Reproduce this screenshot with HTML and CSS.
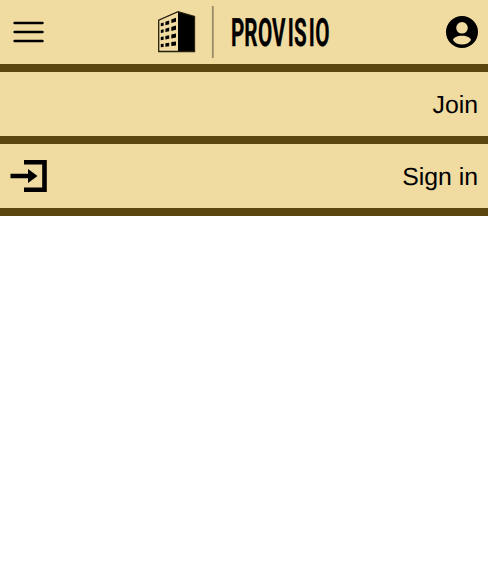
FILE: index.html
```html
<!DOCTYPE html>
<html lang="en">
<head>
<meta charset="utf-8">
<title>Provisio</title>
<link rel="stylesheet" href="styles.css">
</head>
<body>
<header class="bar header">
  <svg class="menu-icon" viewBox="0 0 32 24" aria-label="Menu"><path d="M2.700 3h27.700M2.700 12h27.700M2.700 21h27.700"/></svg>
  <svg class="logo" viewBox="0 0 176 54" role="img" aria-label="Provisio">
    <path d="M22 6.700L39 11.500V47H22Z"/>
    <path class="outline" d="M2.700 46.500V15.200L22 6.700 38.500 11.500V46.500Z"/>
    <path class="windows" d="M4.800 18.300l2.800-.8v3.200l-2.800.6zM9.400 16.800l3.800-1.200v3.600l-3.800 1.100zM15.300 14.500l4.700-1.800v4.100l-4.700 1.300zM4.800 25.100l2.800-.8v3.200l-2.800.6zM9.400 23.700l3.800-1.100v3.600l-3.800.9zM15.300 21.900l4.700-1.300v4.100l-4.700 1.200zM4.800 32.100l2.800-.5v3.200l-2.800.4zM9.400 31l3.800-.8v3.500l-3.800.7zM15.300 29.600l4.700-1v4l-4.700.9zM4.800 39l2.800-.3v3.200l-2.800.3zM9.400 38.200l3.800-.5v3.500l-3.800.5zM15.300 37.100l4.700-.6v3.900l-4.700.6z"/>
    <path class="divider" d="M56.800 1v52"/>
    <text class="wordmark" transform="translate(0 41) scale(.53 1)" x="141.300 166.500 192.700 219 248.500 260.200 288.300 300.600">PROVISIO</text>
  </svg>
  <svg class="account-icon" viewBox="0 0 32 32" aria-label="Account"><path fill-rule="evenodd" d="M16 0a16 16 0 1 1 0 32a16 16 0 0 1 0-32ZM16 6a5.800 5.800 0 1 0 0 11.600a5.800 5.800 0 0 0 0-11.600ZM16 19.700c-4.600 0-9 2-9 4.300c1.700 2.900 5.200 4.600 9 4.600s7.300-1.700 9-4.600c0-2.300-4.400-4.300-9-4.300Z"/></svg>
</header>
<nav>
  <a class="bar item"><span class="label">Join</span></a>
  <a class="bar item">
    <svg class="enter-icon" viewBox="0 0 38 34" aria-hidden="true"><path class="door" d="M14 3.300H34.500V30.700H14"/><path d="M.5 14.800H18V10L27.500 17 18 24V19.200H.5Z"/></svg>
    <span class="label">Sign in</span>
  </a>
</nav>
</body>
</html>
```
FILE: styles.css
```css
body {
  margin: 0;
  background: #fff;
  font-family: "Liberation Sans", Arial, sans-serif;
  color: #000;
  text-rendering: geometricPrecision;
}

.bar {
  box-sizing: border-box;
  display: flex;
  align-items: center;
  height: 72px;
  background: #f0dba1;
  border-bottom: 8px solid #5c460f;
}

.header {
  justify-content: space-between;
  padding: 0 10px 0 12px;
}

.menu-icon {
  width: 32px;
  height: 24px;
  fill: none;
  stroke: #000;
  stroke-width: 2.7;
  stroke-linecap: round;
}

.logo {
  width: 176px;
  height: 54px;
  margin-right: 2px;
}

.outline {
  fill: none;
  stroke: #25200f;
  stroke-width: 1.3;
}

.divider {
  stroke: #988a65;
  stroke-width: 1.8;
}

.wordmark {
  font: 700 39px Roboto, sans-serif;
  stroke: #000;
  stroke-width: 0.3;
}

.account-icon {
  width: 32px;
  height: 32px;
}

.item {
  justify-content: flex-end;
  padding: 0 10px;
  font-size: 24.8px;
}

.enter-icon {
  width: 38px;
  height: 34px;
}

.door {
  fill: none;
  stroke: #000;
  stroke-width: 4.6;
}

.label {
  margin-left: auto;
  padding-top: 3px;
}
```
